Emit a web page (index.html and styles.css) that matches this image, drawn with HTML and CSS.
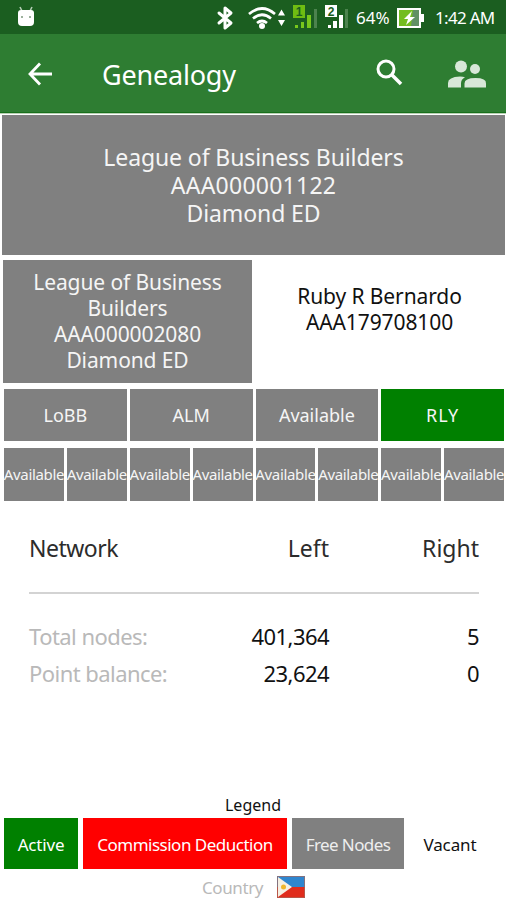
FILE: index.html
```html
<!DOCTYPE html>
<html lang="en">
<head>
<meta charset="utf-8">
<title>Genealogy</title>
<link rel="stylesheet" href="styles.css">
</head>
<body>
<div class="status">
  <svg class="droid" width="18" height="21" viewBox="0 0 18 21"><path d="M3 1l2 4M15 1l-2 4" stroke="#b5cdb5" stroke-width="1.6"/><path d="M1 7q0-3 3-3h10q3 0 3 3v9q0 4-4 4H5q-4 0-4-4z" fill="#fff"/><circle cx="5" cy="11" r="1" fill="#7d977d"/><circle cx="13" cy="11" r="1" fill="#7d977d"/></svg>
  <svg class="bt" width="18" height="26" viewBox="0 0 18 26"><path d="M3 8l12 10-6 5V3l6 5L3 18" fill="none" stroke="#fff" stroke-width="3" stroke-linejoin="round" stroke-linecap="round"/></svg>
  <svg class="wifi" width="40" height="26" viewBox="0 0 40 26"><g fill="none" stroke="#fff" stroke-width="2.7"><path d="M1 10q13-11 26 0"/><path d="M5 14.500q9-7.500 18 0"/><path d="M9 19q5-4 10 0"/></g><circle cx="14" cy="22" r="3" fill="#fff"/><path d="M30 11.500l3.500-6 3.500 6zM30 16h7l-3.500 6z" fill="#fff"/></svg>
  <svg class="sig" width="25" height="26" viewBox="0 0 25 26"><path d="M0 1h12v13H0z" fill="#6fbd12"/><text class="sim" x="6" y="12">1</text><path d="M2 21h3v3H2zM8 18h3v6H8zM14 11h4v13h-4z" fill="#78c81c"/><path d="M21 5h3v19h-3z" fill="#4c834e"/></svg>
  <svg class="sig second" width="25" height="26" viewBox="0 0 25 26"><path d="M0 1h12v12H0z" fill="#fff"/><text class="sim" x="6" y="11.500">2</text><path d="M3 21h3v3H3zM8 17h4v7H8zM14 11h4v13h-4z" fill="#fff"/><path d="M20 5h3v19h-3z" fill="#4c834e"/></svg>
  <span class="pct">64%</span>
  <svg class="bat" width="28" height="20" viewBox="0 0 28 20"><path d="M1 1h22v18H1z" fill="#74bd20" stroke="#fff" stroke-width="2"/><path d="M16 2h6v16h-8z" fill="#609064"/><path d="M24 6h3v8h-3z" fill="#fff"/><path d="M15 3L7 11h4l-2 6 9-8h-5z" fill="#fff"/></svg>
  <span class="time">1:42 AM</span>
</div>
<header class="bar">
  <svg class="back" width="24" height="24" viewBox="0 0 24 24"><path d="M24 12H2M12 1.500L2 12l10 10.500" fill="none" stroke="#fff" stroke-width="2.800"/></svg>
  <h1>Genealogy</h1>
  <svg class="search" width="27" height="27" viewBox="0 0 27 27"><circle cx="10" cy="10" r="8" fill="none" stroke="#fff" stroke-width="3"/><path d="M16 16l9 9" stroke="#fff" stroke-width="3.600"/></svg>
  <svg class="people" width="40" height="28" viewBox="0 0 40 28"><g fill="#d8e7d8"><circle cx="14" cy="6.500" r="6"/><circle cx="28" cy="9" r="5"/><path d="M1 27.500v-4.500q0-6 12-6.500 3 0 5 .8-4 2-4 6v4.200z"/><path d="M17.500 27.500v-4q0-5.500 11-5.500t10.500 5.500v4z"/></g></svg>
</header>
<main>
  <section class="node root"><span>League of Business Builders</span><span class="root-id">AAA000001122</span><span>Diamond ED</span></section>
  <section class="pair">
    <div class="node"><span>League of Business</span><span>Builders</span><span>AAA000002080</span><span>Diamond ED</span></div>
    <div class="node vacant"><span>Ruby R Bernardo</span><span>AAA179708100</span></div>
  </section>
  <section class="four">
    <div class="node"><span>LoBB</span></div><div class="node"><span>ALM</span></div><div class="node"><span>Available</span></div><div class="node active"><span class="spaced">RLY</span></div>
  </section>
  <section class="eight">
    <div class="node"><span>Available</span></div><div class="node"><span>Available</span></div><div class="node"><span>Available</span></div><div class="node"><span>Available</span></div><div class="node"><span>Available</span></div><div class="node"><span>Available</span></div><div class="node"><span>Available</span></div><div class="node"><span>Available</span></div>
  </section>
  <section class="stats">
    <div class="row head"><span class="name">Network</span><span>Left</span><span>Right</span></div>
    <div class="row"><span class="label">Total nodes:</span><span>401,364</span><span>5</span></div>
    <div class="row"><span class="label">Point balance:</span><span>23,624</span><span>0</span></div>
  </section>
</main>
<footer>
  <div class="legend-title">Legend</div>
  <div class="legend">
    <div class="chip active">Active</div><div class="chip deduct">Commission Deduction</div><div class="chip free">Free Nodes</div><div class="chip none">Vacant</div>
  </div>
  <div class="country"><span>Country</span>
    <svg width="28" height="22" viewBox="0 0 28 22"><path d="M0 0h28v11H0z" fill="#2f86cf"/><path d="M0 11h28v11H0z" fill="#e02c1c"/><path d="M1 1l14 10L1 21z" fill="#f6f0e4"/><circle cx="6.500" cy="11" r="2.500" fill="#efb62c"/><path d="M.5.5h27v21H.5z" fill="none" stroke="#a66a5c" stroke-opacity=".7"/></svg>
  </div>
</footer>
</body>
</html>
```
FILE: styles.css
```css
* { box-sizing: border-box; }
body { margin: 0; width: 506px; height: 900px; overflow: hidden; background: #fff; color: #111; font-family: "Noto Sans", sans-serif; display: flex; flex-direction: column; }
span { white-space: nowrap; }
svg { display: block; flex: none; }
.status { height: 34px; flex: none; background: #1b5e20; color: #fff; display: flex; align-items: center; }
.droid { margin-left: 17px; margin-top: -2px; }
.bt { margin-left: 181px; margin-top: 2px; }
.wifi { margin-left: 14px; }
.sig { margin-left: 5px; }
.sig.second { margin-left: 7px; }
.sim { font: bold 12px "Liberation Sans", sans-serif; text-anchor: middle; fill: #1b5e20; }
.pct { margin-left: 6px; width: 36px; font-size: 17px; }
.bat { margin-left: 5px; margin-top: 2px; }
.time { margin-left: 10px; font-size: 17px; letter-spacing: -.7px; }
.bar { height: 80px; flex: none; background: #2e7d32; border-bottom: 1px solid #bad0b5; box-shadow: inset 0 -1px #18701c; display: flex; align-items: center; color: #fff; }
.back { margin-left: 28px; }
.bar h1 { width: 274px; margin: 2px 0 0 50px; font-size: 27px; font-weight: 400; line-height: 38px; letter-spacing: -.2px; }
.search { margin-top: -2px; }
.people { margin-left: 44px; }
.node { background: #808080; color: #f5f5f5; display: flex; flex-direction: column; align-items: center; justify-content: center; min-width: 0; }
.root { height: 140px; margin: 1px 1px 0 2px; font-size: 23px; line-height: 28px; letter-spacing: -.1px; }
.root-id { letter-spacing: .25px; }
.pair { display: grid; grid-template-columns: 249px 249px; gap: 3px; height: 123px; margin: 5px 2px 0 3px; font-size: 21px; line-height: 26px; letter-spacing: -.1px; }
.pair .node { padding-bottom: 2px; }
.pair .vacant { background: #fff; color: #111; padding-bottom: 26px; }
.four { display: grid; grid-template-columns: repeat(4, 1fr); gap: 3px; height: 52px; margin: 6px 2px 0 4px; font-size: 18px; }
.spaced { letter-spacing: 1px; }
.eight { display: grid; grid-template-columns: repeat(8, 1fr); gap: 3px; height: 53px; margin: 7px 2px 0 4px; font-size: 15px; letter-spacing: -.35px; }
.eight .node { padding-bottom: 2px; }
.active { background: #008000; }
.stats { margin: 22px 27px 0 29px; font-size: 22px; letter-spacing: -.55px; }
.row { display: grid; grid-template-columns: 200px 100px 150px; height: 37px; line-height: 37px; }
.row > :not(:first-child) { text-align: right; }
.head { height: 71px; margin-bottom: 24px; line-height: 50px; border-bottom: 2px solid #d3d3d3; color: #2c2c2c; font-size: 23px; letter-spacing: 0; }
.name { letter-spacing: -.5px; }
.label { color: #b9b9b9; }
footer { margin-top: auto; height: 107px; flex: none; }
.legend-title { height: 25px; line-height: 24px; text-align: center; font-size: 16px; }
.legend { display: grid; grid-template-columns: 74px 204px 112px 82px; gap: 5px; height: 51px; padding-left: 4px; font-size: 17px; }
.chip { display: flex; align-items: center; justify-content: center; padding-top: 2px; color: #fff; letter-spacing: -.5px; }
.active.chip { letter-spacing: -.2px; }
.deduct { background: #f00; }
.free { background: #808080; color: #eee; letter-spacing: -.6px; }
.none { color: #111; letter-spacing: -.1px; }
.country { display: flex; align-items: center; height: 36px; margin-left: 202px; gap: 14px; font-size: 17px; letter-spacing: -.4px; color: #b9b9b9; }
```
